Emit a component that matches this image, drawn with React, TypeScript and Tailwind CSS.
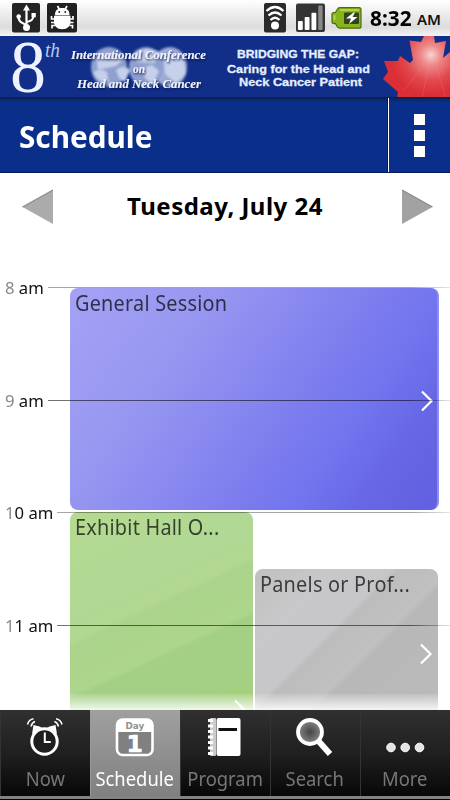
import clsx from "clsx";
import type { ReactNode } from "react";

interface ITab {
  label: string;
  icon: ReactNode;
  active?: boolean;
}

const hours = [
  { num: "8", rest: "", width: "w-[48px]" },
  { num: "9", rest: "", width: "w-[48px]" },
  { num: "1", rest: "0", width: "w-[57px]" },
  { num: "1", rest: "1", width: "w-[57px]" },
];

function StatusBar() {
  return (
    <div className="flex h-9 items-center bg-linear-to-b from-white via-[#dcdcdc] via-[75%] to-[#f4f4f4]">
      <svg className="ml-3 h-[30px] w-7" viewBox="0 0 28 30">
        <rect width="28" height="29.5" rx="2" fill="#242424" />
        <g fill="none" stroke="#fff" strokeWidth="2.2">
          <path d="M14.5 25V5M14.5 22C10 20 6.5 19 6.5 14M14.5 19C19 18 21.5 17 21.5 12" />
        </g>
        <g fill="#fff">
          <path d="M14.5 1.500l3.500 6h-7z" />
          <circle cx="14.5" cy="24.500" r="3.500" />
          <circle cx="6.700" cy="13.500" r="2.300" />
          <path d="M19.500 10h4.300v4.300h-4.300z" />
        </g>
      </svg>
      <svg className="ml-[7px] h-[30px] w-[30px]" viewBox="0 0 30 30">
        <rect width="30" height="29.5" rx="2" fill="#202020" />
        <g fill="none" stroke="#fff" strokeWidth="1.700">
          <path d="M10.500 3l2 3.500M20 3l-2 3.500M4.500 13v3h4M4 19.500h4M8 22.500H5v3M26 13v3h-4M26.500 19.500h-4M22.500 22.500h3v3" />
        </g>
        <g fill="#fff">
          <path d="M8 12C8 7 11 5 15.300 5s7.200 2 7.200 7z" />
          <path d="M7 12.800h16.500v6c0 4-3 7.500-8.300 7.500S7 22.800 7 18.800z" />
        </g>
        <circle cx="12.300" cy="9" r="0.900" fill="#202020" />
        <circle cx="18.300" cy="9" r="0.900" fill="#202020" />
        <path d="M8 12.500h14.500" stroke="#aaa" strokeWidth="0.600" />
      </svg>
      <svg className="ml-auto h-[30px] w-[22px]" viewBox="0 0 22 30">
        <rect width="22" height="29.5" rx="2" fill="#2a2a2a" />
        <g fill="none" stroke="#fff" strokeWidth="2.300">
          <path d="M2.500 8Q11 0 19.500 8M4.500 12.500Q11 6.500 17.500 12.500M6.500 17Q11 12.500 15.500 17" />
        </g>
        <circle cx="11" cy="22.500" r="4" fill="#fff" />
      </svg>
      <svg className="ml-[10px] h-[30px] w-[29px]" viewBox="0 0 30 30">
        <rect width="30" height="29.5" rx="2" fill="#343434" />
        <g fill="#fff">
          <rect x="2" y="18" width="5" height="9.500" rx="1" />
          <rect x="9" y="14" width="5" height="13.500" rx="1" />
          <rect x="16" y="9.500" width="5" height="18" rx="1" />
        </g>
        <rect x="23" y="2" width="4.500" height="25.500" rx="1" fill="#888" />
      </svg>
      <svg className="ml-[6px] h-[22px] w-[31px]" viewBox="0 0 31 22">
        <path
          d="M9 .7h19q2 0 2 2v16.500q0 2-2 2H9q-2 0-3-2l-1.500-2.500H3q-2 0-2-2V7.500q0-2 2-2h1.500L6 2.700q1-2 3-2z"
          fill="#86b51a"
          stroke="#4d6b12"
          strokeWidth="1.200"
        />
        <path d="M9 3h19M3.500 8v5" stroke="#b0d545" strokeWidth="2" />
        <rect x="13" y="5.500" width="15" height="11.500" rx="1" fill="#35431c" />
        <path d="M22.500 5.500l-7.500 6h5l-2 5.500 8.500-7h-5l2.500-4.500z" fill="#fff" />
      </svg>
      <span className="ml-[8px] w-[43px] font-['Noto_Sans'] text-[21px] leading-none font-bold whitespace-nowrap text-black">
        <span className="inline-block origin-left scale-x-[0.99]">8:32</span>
      </span>
      <span className="mt-[3px] mr-[8px] ml-[4px] w-[25px] font-['Noto_Sans'] text-[15px] leading-none font-semibold text-[#111]">
        <span className="inline-block origin-left">AM</span>
      </span>
    </div>
  );
}

function Banner() {
  return (
    <svg className="block h-[62px] w-full overflow-visible" viewBox="0 0 450 62">
      <defs>
        <radialGradient id="leaf" cx="431" cy="19" r="40" gradientUnits="userSpaceOnUse">
          <stop offset="0" stopColor="#f9d3d2" />
          <stop offset=".25" stopColor="#ee8a8a" />
          <stop offset=".65" stopColor="#e1484d" />
          <stop offset="1" stopColor="#db2f37" />
        </radialGradient>
        <filter id="soft">
          <feGaussianBlur stdDeviation="1.2" />
        </filter>
        <filter id="shade" x="-10%" y="-30%" width="120%" height="170%">
          <feDropShadow dx="0.8" dy="1.3" stdDeviation="0.9" floodColor="#08174e" />
        </filter>
      </defs>
      <rect width="450" height="62" fill="#112f88" />
      {/* Globes */}
      <g filter="url(#soft)">
        <ellipse cx="109" cy="31" rx="18" ry="20" fill="#8fa0d0" />
        <ellipse cx="170" cy="31" rx="17" ry="20" fill="#9daad4" />
        <ellipse cx="146" cy="31" rx="17" ry="20" fill="#8fa0d0" />
        <path d="M96 20q14-7 28 3l-8 7-18 4zM93 36q8-4 14 0l2 12q-12-2-16-12zM116 34q8-6 14 0l-5 12-6-4zM134 17q16-9 30 2l-10 8-17-1zM144 32l8-3 7 6-6 13-8-6zM164 22q12-6 20 4l2 12-10 9-11-9z" fill="#c6d0ea" />
      </g>
      <g fontFamily="Liberation Serif" fill="#eef2ff">
        <text x="10" y="55.500" fontSize="74" textLength="36" lengthAdjust="spacingAndGlyphs">
          8
        </text>
        <text x="45" y="21" fontSize="21" fontStyle="italic" fill="#b9c9ef" textLength="15" lengthAdjust="spacingAndGlyphs">
          th
        </text>
        <g fontSize="13.5" fontStyle="italic" fontWeight="bold" filter="url(#shade)">
          <text x="71" y="22.500" textLength="135" lengthAdjust="spacingAndGlyphs">
            International Conference
          </text>
          <text x="133" y="36.500" textLength="12" lengthAdjust="spacingAndGlyphs">
            on
          </text>
          <text x="77" y="51.500" textLength="124" lengthAdjust="spacingAndGlyphs">
            Head and Neck Cancer
          </text>
        </g>
      </g>
      <g fontFamily="Liberation Sans" fontSize="11.8" fontWeight="bold" fill="#e6eeff" stroke="#e6eeff" strokeWidth="0.3">
        <text x="237" y="22" textLength="122" lengthAdjust="spacingAndGlyphs">
          BRIDGING THE GAP:
        </text>
        <text x="227" y="36.500" textLength="143" lengthAdjust="spacingAndGlyphs">
          Caring for the Head and
        </text>
        <text x="239" y="50" textLength="123" lengthAdjust="spacingAndGlyphs">
          Neck Cancer Patient
        </text>
      </g>
      {/* Maple leaf */}
      <path
        d="M424 0L421 6 409.5 4.500 413 24 410 27 400 20 398 25 384 25 388 36 383 43 398 56 397 62H450V16L443 22 446 5 435 7 434 0Z"
        fill="url(#leaf)"
      />
      <path d="M431 20L422 62M433 20L446 62M429 22L404 54" stroke="#f4a09e" strokeWidth="1" opacity=".2" />
      <path d="M0 61.500h450" stroke="#0b1f4c" />
    </svg>
  );
}

function Header() {
  return (
    <div className="relative flex h-[75px] border-b border-[#071b59] bg-linear-to-b from-[#0b2553] via-[#0a2f8b] via-[6%] to-[#0a2f8b]">
      <h1 className="flex-1 pt-[19px] pl-[19px] font-['Noto_Sans'] text-[30px] leading-[40px] font-bold text-white">
        <span className="inline-block origin-left scale-x-[0.99]">Schedule</span>
      </h1>
      <div className="flex w-[62px] flex-col items-center gap-[5px] border-l border-white pt-[16px] shadow-[-1px_0_0_#051747]">
        <i className="h-[11px] w-[11px] bg-white" />
        <i className="h-[11px] w-[11px] bg-white" />
        <i className="h-[11px] w-[11px] bg-white" />
      </div>
    </div>
  );
}

function DateRow() {
  return (
    <div className="flex h-[67px] items-center justify-between pr-[17px] pl-[22px]">
      <svg className="h-9 w-8" viewBox="0 0 32 36">
        <path d="M0.500 18L31 1v34z" fill="#ababab" />
        <path d="M0.500 18L31 1" stroke="#8d8d8d" strokeWidth="1.300" />
      </svg>
      <h2 className="-mt-[2px] -ml-[5px] font-['Noto_Sans'] text-[24px] leading-none font-bold tracking-[0.48px] whitespace-nowrap text-black">
        Tuesday, July 24
      </h2>
      <svg className="h-9 w-8" viewBox="0 0 32 36">
        <path d="M1 1v34l30.500-17z" fill="#a2a2a2" />
        <path d="M1 1l30.500 17" stroke="#8a8a8a" strokeWidth="1.300" />
      </svg>
    </div>
  );
}

function Chevron({ className }: { className?: string }) {
  return (
    <svg className={clsx("h-[22px] w-[14px]", className)} viewBox="0 0 14 22">
      <path d="M2 1.500l9.500 9.500L2 20.500" fill="none" stroke="#fff" strokeWidth="2.2" />
    </svg>
  );
}

function EventTitle({ children }: { children: ReactNode }) {
  return (
    <p className="h-[30px] pt-px pl-[5px] font-['Noto_Sans'] text-[21px] leading-[29px] tracking-[0.25px] whitespace-nowrap text-black/70">
      <span className="inline-block origin-left scale-x-[0.945]">{children}</span>
    </p>
  );
}

function Agenda() {
  return (
    <div className="grid h-[470px] overflow-hidden bg-white">
      {/* Events */}
      <div className="col-start-1 row-start-1 flex h-[470px] flex-col overflow-hidden pt-[48px] pr-[11px] pl-[70px]">
        <div className="flex h-[222px] shrink-0 flex-col rounded-lg border-r-2 border-[#8c8cf2] bg-[linear-gradient(125deg,#a5a2f5_0%,#9797f1_28%,#8787f0_48%,#7b7bee_62%,#7175ee_72%,#6868e6_84%,#6060e0_100%)]">
          <EventTitle>General Session</EventTitle>
          <Chevron className="mt-[72px] mr-[3px] self-end" />
        </div>
        <div className="mt-[2px] flex gap-[2px]">
          <div className="flex h-[210px] w-[183px] flex-col rounded-lg bg-[linear-gradient(155deg,#b5da91_0%,#b0d894_35%,#b2d790_44%,#abd38b_46%,#add68c_62%,#a3d084_64%,#a3d084_82%,#a9d077_100%)]">
            <EventTitle>Exhibit Hall O...</EventTitle>
            <Chevron className="mt-[157px] mr-[6px] shrink-0 self-end" />
          </div>
          <div className="mt-[57px] flex h-[160px] w-[183px] flex-col rounded-lg bg-[linear-gradient(135deg,#c0c0c0_0%,#c8c7c9_22%,#c7c6c8_40%,#bebdbe_42%,#c0c0c1_57%,#b9b8b9_59%,#bcbbbc_100%)]">
            <EventTitle>Panels or Prof...</EventTitle>
            <Chevron className="mt-[44px] mr-[5px] self-end" />
          </div>
        </div>
      </div>
      {/* Hour lines */}
      <div className="z-10 col-start-1 row-start-1 flex h-[470px] flex-col overflow-hidden pt-[36px]">
        {hours.map((hour, i) => (
          <div key={i} className="flex h-[112.5px] shrink-0 items-start">
            <div
              className={clsx(
                "shrink-0 pl-[5px] font-['Noto_Sans'] text-[17px] leading-[24px] whitespace-nowrap text-[#111]",
                hour.width,
              )}
            >
              <span className="inline-block origin-left scale-x-[0.98]">
                <span className="text-[#888]">{hour.num}</span>
                {hour.rest} am
              </span>
            </div>
            <div
              className={clsx(
                "mt-[11px] h-px flex-1 bg-linear-to-r from-[90%]",
                i % 2 === 0 ? "from-black/35 to-black/10" : "from-black/55 to-black/10",
              )}
            />
          </div>
        ))}
      </div>
      {/* Bottom fade */}
      <div className="z-20 col-start-1 row-start-1 h-4 self-end bg-linear-to-b from-white/10 to-white/85" />
    </div>
  );
}

const tabs: ITab[] = [
  {
    label: "Now",
    icon: (
      <svg className="h-[40px] w-[40px]" viewBox="0 0 40 40">
        <path d="M7 16l1.500-9 6 1.500 3.500 2zM32 16l-1.500-9-6 1.500-3.500 2z" fill="#fff" />
        <circle cx="19.500" cy="23.500" r="12.700" fill="#1e1e1e" stroke="#fff" strokeWidth="3" />
        <path d="M19.800 14.500v9.500h6" fill="none" stroke="#fff" strokeWidth="2" />
        <path d="M6 8.500Q7 4.500 10 3.500M2.500 6.500Q4 1.500 8.500 .8M33.500 8.500Q32.500 4.500 29.500 3.500M37 6.500Q35.500 1.500 31 .8" fill="none" stroke="#fff" strokeWidth="1.6" />
      </svg>
    ),
  },
  {
    label: "Schedule",
    active: true,
    icon: (
      <svg className="h-[40px] w-[40px]" viewBox="0 0 40 40">
        <rect x="2" y="1.500" width="35.500" height="35.500" rx="5.500" fill="#808080" stroke="#fff" strokeWidth="2.600" />
        <path d="M2 14V6q0-4 4-4h27.500q4 0 4 4v8z" fill="#fff" />
        <text x="19.800" y="10.500" textAnchor="middle" fontFamily="DejaVu Sans" fontSize="8.8" fontWeight="bold" fill="#909090">
          Day
        </text>
        <text x="19.800" y="34" textAnchor="middle" fontFamily="DejaVu Sans" fontSize="23.5" fontWeight="bold" fill="#fff" stroke="#fff" strokeWidth="0.6">
          1
        </text>
      </svg>
    ),
  },
  {
    label: "Program",
    icon: (
      <svg className="h-[40px] w-[40px]" viewBox="0 0 40 40">
        <rect x="5" y="0" width="6" height="38" rx="1" fill="#ccc" />
        <path d="M3 2.500h5M3 8h5M3 13.500h5M3 19h5M3 24.500h5M3 30h5M3 35.500h5" stroke="#fff" strokeWidth="3" />
        <rect x="11.500" y="0" width="24" height="38" rx="2" fill="#fff" />
        <path d="M13.500 11.500h18.500" stroke="#111" strokeWidth="3" />
      </svg>
    ),
  },
  {
    label: "Search",
    icon: (
      <svg className="h-[40px] w-[40px]" viewBox="0 0 40 40">
        <defs>
          <radialGradient id="lens">
            <stop offset="0" stopColor="#444" />
            <stop offset="1" stopColor="#888" />
          </radialGradient>
        </defs>
        <path d="M23 22.500l12 13.500" stroke="#fff" strokeWidth="6" />
        <circle cx="15" cy="14" r="12" fill="url(#lens)" stroke="#fff" strokeWidth="3.8" />
      </svg>
    ),
  },
  {
    label: "More",
    icon: (
      <svg className="h-[40px] w-[40px]" viewBox="0 0 40 40">
        <g fill="#e4e4e4" stroke="#fff">
          <circle cx="6" cy="29.500" r="4.300" />
          <circle cx="20.200" cy="29.500" r="4.300" />
          <circle cx="34.500" cy="29.500" r="4.300" />
        </g>
      </svg>
    ),
  },
];

function TabBar() {
  return (
    <div className="flex h-[90px] flex-col bg-black">
      <div className="flex h-[86px]">
        {tabs.map((tab) => (
          <div
            key={tab.label}
            className={clsx(
              "flex w-[90px] flex-col items-center border-l pt-[8px] pr-[2px] font-['Noto_Sans'] text-[20px] leading-[28px]",
              tab.active
                ? "border-[#999] bg-linear-to-b from-[#a0a0a0] to-[#808080] text-white"
                : "border-[#333] bg-linear-to-b from-[#303030] via-[#202020] to-[#080808] text-[#777]",
            )}
          >
            {tab.icon}
            <span className="mt-[7px] ml-px scale-x-[0.92]">{tab.label}</span>
          </div>
        ))}
      </div>
      <div className="h-[3px] bg-[#838383]" />
    </div>
  );
}

export default function App() {
  return (
    <div className="flex h-[800px] w-[450px] flex-col overflow-hidden bg-white font-['Noto_Sans',sans-serif]">
      <StatusBar />
      <Banner />
      <Header />
      <DateRow />
      <Agenda />
      <TabBar />
    </div>
  );
}
